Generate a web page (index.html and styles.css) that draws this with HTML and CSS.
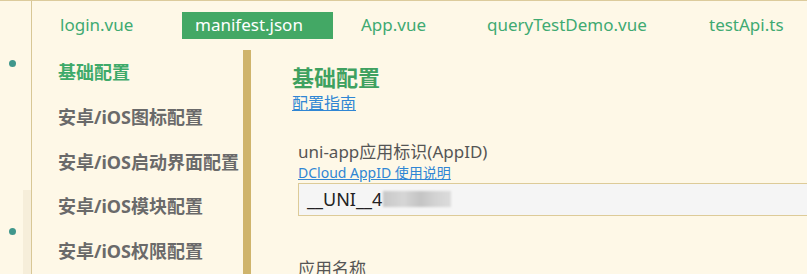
FILE: index.html
```html
<!DOCTYPE html>
<html>
<head>
  <title>manifest.json</title>
  <link rel="stylesheet" href="styles.css">
</head>
<body>

<div class="app">
  <!-- Left gutter -->
  <div class="gutter">
    <div class="gutter-dots">
      <span class="dot"></span>
      <span class="dot dot-low"></span>
    </div>
    <div class="gutter-side">
      <div class="gutter-strip"></div>
    </div>
  </div>

  <div class="main">
    <!-- Editor tabs -->
    <div class="tabs">
      <div class="tab tab-login">login.vue</div>
      <div class="tab tab-manifest active">manifest.json</div>
      <div class="tab tab-app">App.vue</div>
      <div class="tab tab-query">queryTestDemo.vue</div>
      <div class="tab">testApi.ts</div>
    </div>

    <div class="editor">
      <!-- Section menu -->
      <div class="menu">
        <div class="menu-item selected">基础配置</div>
        <div class="menu-item">安卓/iOS图标配置</div>
        <div class="menu-item">安卓/iOS启动界面配置</div>
        <div class="menu-item">安卓/iOS模块配置</div>
        <div class="menu-item">安卓/iOS权限配置</div>
      </div>
      <div class="scrollbar"></div>

      <!-- Form -->
      <div class="content">
        <h2 class="title">基础配置</h2>
        <a class="guide" href="#">配置指南</a>

        <div class="field">
          <div class="field-label">uni-app应用标识(AppID)</div>
          <a class="field-help" href="#">DCloud AppID 使用说明</a>
          <div class="field-input">__UNI__4<span class="masked"></span></div>
        </div>

        <div class="field field-name">
          <div class="field-label">应用名称</div>
        </div>
      </div>
    </div>
  </div>
</div>

</body>
</html>
```

FILE: styles.css
```css
body {
  margin: 0;
  height: 274px;
  overflow: hidden;
  background-color: #FEF8E7;
  border-top: 1px solid #DCCB9C;
  box-sizing: border-box;
  font-family: "Noto Sans", "Noto Sans CJK SC", sans-serif;
  color: #555;
}
.app {
  display: flex;
  height: 273px;
}
.gutter {
  width: 31px;
  border-right: 1px solid #D8C796;
  display: grid;
  grid-template-columns: 23px 8px;
  flex-shrink: 0;
}
.gutter-dots {
  display: flex;
  flex-direction: column;
  padding-top: 59px;
  padding-left: 9px;
}
.dot {
  width: 7px;
  height: 7px;
  border-radius: 50%;
  background-color: #40978C;
}
.dot-low {
  margin-top: 161px;
}
.gutter-side {
  padding-top: 189px;
}
.gutter-strip {
  height: 100%;
  background-color: #F6EEDA;
}
.main {
  flex: 1;
  display: flex;
  flex-direction: column;
  overflow: hidden;
}
.tabs {
  display: flex;
  padding: 11px 0 0 15px;
  height: 39px;
  box-sizing: border-box;
}
.tab {
  height: 27px;
  line-height: 26px;
  padding-left: 13px;
  box-sizing: border-box;
  font-size: 17px;
  color: #3FAA72;
  white-space: nowrap;
}
.tab-login {
  width: 135px;
}
.tab-manifest {
  width: 151px;
  margin-right: 15px;
}
.tab-app {
  width: 126px;
}
.tab-query {
  width: 222px;
}
.tab.active {
  background-color: #43A865;
  color: #FFF;
}
.editor {
  flex: 1;
  display: flex;
  margin-top: 11px;
}
.menu {
  width: 211px;
  flex-shrink: 0;
  padding-left: 26px;
  box-sizing: border-box;
}
.menu-item {
  height: 44.75px;
  line-height: 44.75px;
  font-size: 18px;
  font-weight: bold;
  color: #6A6A6A;
  white-space: nowrap;
}
.menu-item.selected {
  color: #3EAA6A;
}
.scrollbar {
  width: 8px;
  flex-shrink: 0;
  background-color: #CFB46C;
}
.content {
  flex: 1;
  padding: 14px 0 0 41px;
  overflow: hidden;
}
.title {
  margin: 0;
  font-size: 22px;
  line-height: 26px;
  color: #3FA160;
}
.guide {
  display: block;
  line-height: 26px;
  font-size: 16px;
  color: #2F86D4;
}
.field {
  margin-top: 24px;
  padding-left: 6px;
}
.field-label {
  font-size: 17px;
  line-height: 24px;
  color: #555;
  white-space: nowrap;
}
.field-help {
  display: block;
  font-size: 14px;
  line-height: 18px;
  color: #2F86D4;
  margin-bottom: 1px;
}
.field-input {
  width: 600px;
  height: 33px;
  line-height: 31px;
  box-sizing: border-box;
  border: 1px solid #DDCB98;
  background-color: #F5F5F5;
  padding-left: 8px;
  font-size: 18px;
  color: #222;
  white-space: nowrap;
}
.masked {
  display: inline-block;
  width: 68px;
  height: 16px;
  margin-left: 1px;
  vertical-align: -1px;
  background: linear-gradient(90deg, #C8C8C8, #D6D6D6 30%, #C4C4C4 55%, #D2D2D2 75%, #DCDCDC);
  filter: blur(1px);
}
.field-name {
  margin-top: 41px;
}
```
